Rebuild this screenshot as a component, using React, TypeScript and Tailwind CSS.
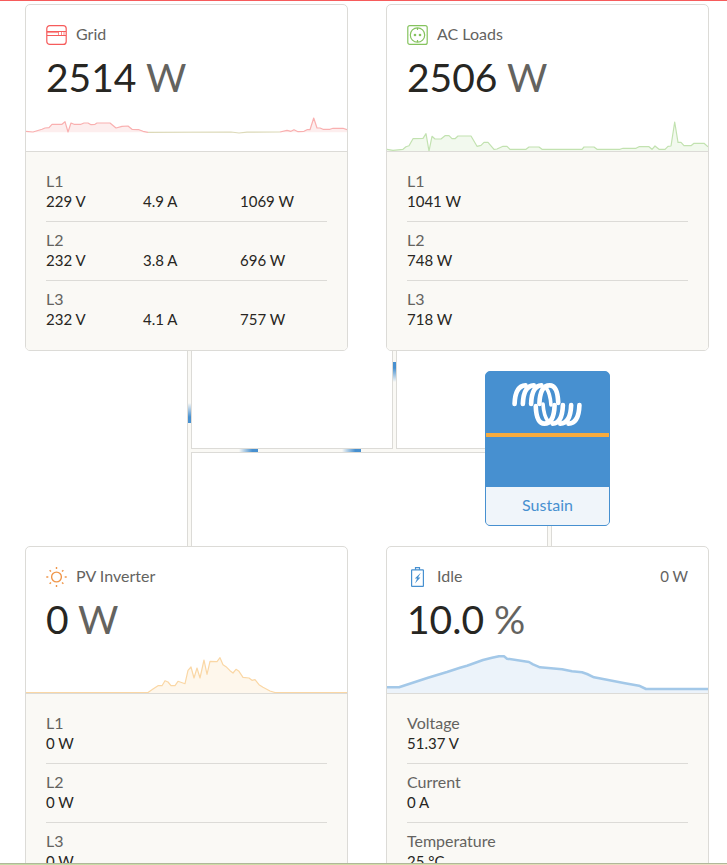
import type { ReactNode } from 'react';
import clsx from 'clsx';

type Row = { label: string; values: string[] };

const gridRows: Row[] = [
    { label: 'L1', values: ['229 V', '4.9 A', '1069 W'] },
    { label: 'L2', values: ['232 V', '3.8 A', '696 W'] },
    { label: 'L3', values: ['232 V', '4.1 A', '757 W'] },
];

const loadRows: Row[] = [
    { label: 'L1', values: ['1041 W'] },
    { label: 'L2', values: ['748 W'] },
    { label: 'L3', values: ['718 W'] },
];

const pvRows: Row[] = [
    { label: 'L1', values: ['0 W'] },
    { label: 'L2', values: ['0 W'] },
    { label: 'L3', values: ['0 W'] },
];

const batteryRows: Row[] = [
    { label: 'Voltage', values: ['51.37 V'] },
    { label: 'Current', values: ['0 A'] },
    { label: 'Temperature', values: ['25 °C'] },
];

// 24h of history, x runs 0-321, y 0-60
const gridMorning =
    '0,40.3 7,41 16,38.3 19,37 23,36.7 26,33.3 36,33.3 39,30.7 42,41 45,32 48,33.3 55,33.3 58,32 62,32 65,33.7 69,33.3 71,32 84,32 90,37 96,35.3 102,35 106,38.3 113,38.7 117,40.3 122,41.3';
const gridMidday = '122,41.3 205,41 213,42 221,41.2 254,41';
const gridEvening =
    '254,41 261,39.3 265,40.3 268,38.7 272,40.7 278,40.3 281,38.7 284,38.7 287.7,27 291,37 294,37 297,38.3 304,38.3 307,37.3 317,37.3 321,38.7';
const loadHistory =
    '0,58.3 6,59.3 16,58.3 19,55.7 22,54.7 26,47.7 36,47.3 39,42.7 42,60 45,45.3 48,48 54,48 58,44.7 62,44.7 65,47.7 68,47.7 71,45 84,45 90,55.3 94,54.3 97,51.3 101,51.3 107,58.3 110,58 116,55.3 120,55.3 123,58.3 139,58.3 142,56 152,56 155,58.3 195,58.3 197,56 207,56 210,58.3 233,58.3 236,57.3 249,57.3 252,55.7 262,55.7 265,58.3 268,55 272,58.3 278,58.3 281,55.3 284,55 287.7,31 291,51.3 294,51.3 297,54.7 304,54.7 307,52.3 317,52.3 321,55.7';
const pvHistory =
    '0,59.5 122,59.5 127,56 132,52.7 136,52.7 139,47.7 142,49 145,52.7 149,52.7 152,48.3 159,50.7 162,37.3 165,34 168,45 171,35 174,45 178,27 181,41.3 184,28.3 191,28.7 194,24.7 197,31.7 200,33.7 204,37.7 207,40 210,36.3 213,38.3 217,44.3 223,45 226,47.3 229,46.7 233,51.7 237,54.3 244,58 249,59.5 321,59.5';
const batteryHistory =
    '0,54.3 12,54.3 41,44.7 60,39 73,34.7 80,32.7 96,27 105,24.7 112,23.2 117,23.3 120,25.7 142,29 146,31.3 153,34.3 175,36.3 185,38.3 195,39.3 200,41 207,44.3 238,50.3 252,52.7 259,56 321,56';

type SeriesProps = { points: string; stroke: string; fill: string; base?: number; width?: number };

function Series({ points, stroke, fill, base = 60, width = 1.2 }: SeriesProps) {
    const start = points.split(',')[0];
    const end = points.split(' ').pop()!.split(',')[0];
    return (
        <>
            <polygon points={`${start},${base} ${points} ${end},${base}`} fill={fill} />
            <polyline points={points} fill="none" stroke={stroke} strokeWidth={width} strokeLinejoin="round" />
        </>
    );
}

function GridIcon() {
    return (
        <svg viewBox="0 0 21 20" className="w-[21px] h-5" fill="none" stroke="#f65b5b" strokeWidth="1.2">
            <rect x="0.8" y="0.6" width="19.4" height="18.8" rx="3" />
            <path d="M1 6.5h19M1 10.5h19" />
            <path d="M1 7.6h11.5M12.5 7v3.5M15.5 7v3.5M18 7v3.5" strokeOpacity="0.7" strokeWidth="1" />
        </svg>
    );
}

function SocketIcon() {
    return (
        <svg viewBox="0 0 21 20" className="w-[21px] h-5" fill="none" stroke="#85c35e" strokeWidth="1.2">
            <rect x="0.8" y="0.6" width="19.4" height="18.8" rx="2" />
            <circle cx="10.5" cy="10" r="7.2" />
            <path d="M10.5 3v2M10.5 15v2" />
            <g fill="#85c35e" stroke="none">
                <circle cx="8" cy="10" r="1.3" />
                <circle cx="13" cy="10" r="1.3" />
            </g>
        </svg>
    );
}

function SunIcon() {
    return (
        <svg viewBox="0 0 21 20" className="w-[21px] h-5" fill="none" stroke="#f0964a" strokeWidth="1.4">
            <circle cx="10.5" cy="10" r="4.9" />
            <path d="M10.5 0v2M10.5 18V20M0.3 10h2M18.7 10h2M3.6 3.2l1.4 1.4M16 15.4l1.4 1.4M17.4 3.2l-1.4 1.4M5 15.4l-1.4 1.4" />
        </svg>
    );
}

function BatteryIcon() {
    return (
        <svg viewBox="0 0 21 20" className="w-[21px] h-5" fill="none" stroke="#4790d0" strokeWidth="1.2">
            <rect x="4.6" y="2.8" width="11.8" height="16.6" rx="0.5" />
            <path d="M8.5 2.8V0.7h4V2.8" />
            <path d="M13.8 5.8l-6 5.8h2.3l-2.1 5 5.4-6.2h-2.3z" fill="#4790d0" stroke="none" />
        </svg>
    );
}

type CardProps = {
    icon: ReactNode;
    title: string;
    aside?: string;
    value: string;
    unit: string;
    rows: Row[];
    children: ReactNode;
};

function Card({ icon, title, aside, value, unit, rows, children }: CardProps) {
    return (
        <section className="border border-[#dcdbd7] rounded-[5px] bg-white overflow-hidden">
            <header className="px-5 pt-5">
                <div className="flex items-center h-5 leading-5 text-[#64635f]">
                    {icon}
                    <h2 className="ml-[9px] text-[16px] leading-[18px] pb-0.5">{title}</h2>
                    {aside && <span className="ml-auto text-[15px] leading-[18px] pb-0.5">{aside}</span>}
                </div>
                <p className="mt-2 text-[39px] leading-12 text-[#272622]">
                    {value} <span className="text-[#64635f]">{unit}</span>
                </p>
            </header>
            <svg viewBox="0 10 321 50" preserveAspectRatio="none" className="block w-full h-[50px]">
                {children}
            </svg>
            <dl className="border-t border-[#dcdbd7] bg-[#faf9f5] px-5 py-[11px]">
                {rows.map((row, i) => (
                    <div
                        key={row.label}
                        className={clsx(
                            'grid grid-cols-3 gap-x-[10px] pt-2 pb-[9px]',
                            i < rows.length - 1 && 'border-b border-[#dcdbd7]',
                        )}
                    >
                        <dt className="col-span-3 text-[16px] leading-5 text-[#64635f]">{row.label}</dt>
                        {row.values.map((v) => (
                            <dd key={v} className="text-[15px] leading-[21px] text-[#272622]">{v}</dd>
                        ))}
                    </div>
                ))}
            </dl>
        </section>
    );
}

function Wires() {
    return (
        <svg
            viewBox="0 0 684 195"
            preserveAspectRatio="none"
            className="absolute inset-0 w-full h-full"
            shapeRendering="crispEdges"
        >
            <defs>
                <linearGradient id="down" x1="0" y1="0" x2="0" y2="1">
                    <stop offset="0" stopColor="#4790d0" stopOpacity="0" />
                    <stop offset="0.7" stopColor="#4790d0" />
                </linearGradient>
                <linearGradient id="up" x1="0" y1="1" x2="0" y2="0">
                    <stop offset="0" stopColor="#4790d0" stopOpacity="0" />
                    <stop offset="0.7" stopColor="#4790d0" />
                </linearGradient>
                <linearGradient id="right">
                    <stop offset="0" stopColor="#4790d0" stopOpacity="0" />
                    <stop offset="0.7" stopColor="#4790d0" />
                </linearGradient>
            </defs>
            <path d="M163 0h3v195h-3zM368 0h3v98h-3zM163 98h300v3H163zM523 170h3v25h-3z" fill="#faf9f5" />
            <path
                d="M162.5 0V195M166.5 0V97.5H367.5V0M371.5 0V97.5H463M463 101.5H166.5V195M522.5 170V195M526.5 170V195"
                fill="none"
                stroke="#dcdbd7"
            />
            <rect x="163" y="52" width="3" height="20" fill="url(#down)" />
            <rect x="368" y="11" width="3" height="20" fill="url(#up)" />
            <rect x="214" y="98" width="19" height="3" fill="url(#right)" />
            <rect x="317" y="98" width="19" height="3" fill="url(#right)" />
        </svg>
    );
}

function CoilLogo() {
    return (
        <svg viewBox="0 0 210 130" className="w-[70px] h-[43px]" fill="none" stroke="#fff" strokeWidth="14" strokeLinecap="round">
            <path d="M7 63C8 32 17 8 40 7" />
            <path d="M32 63C33 32 42 8 65 7" />
            <path d="M57 63C58 32 67 8 88 7" />
            <path d="M82 63C83 32 92 7 113 7C133 7 138 32 139 60" />
            <path d="M203 67C202 98 193 122 170 123" />
            <path d="M178 67C177 98 168 122 145 123" />
            <path d="M153 67C152 98 143 122 122 123" />
            <path d="M128 67C127 98 118 123 97 123C77 123 72 98 71 70" />
            <path d="M102 14C114 30 116 50 117 66" strokeWidth="11" />
            <path d="M108 116C96 100 94 80 93 64" strokeWidth="11" />
        </svg>
    );
}

function Inverter() {
    return (
        <div className="relative w-[125px] h-[155px] rounded-[5px] border border-[#4790d0] bg-[#4790d0] overflow-hidden">
            <div className="flex justify-center pt-[11px] pr-[2px] h-[61px]">
                <CoilLogo />
            </div>
            <div className="-mx-px h-1 bg-[#f7ab3e]" />
            <div className="h-[50px]" />
            <p className="h-[38px] leading-[36px] text-center text-[16px] text-[#4790d0] bg-[#f0f5fa]">Sustain</p>
        </div>
    );
}

export default function App() {
    return (
        <div className="flex flex-col h-screen overflow-hidden bg-white font-['Lato','Open_Sans',sans-serif]">
            <div className="h-px shrink-0 bg-[#f65b5b]" />
            <main className="flex-1 min-h-0 overflow-hidden pt-[3px] pl-[25px] pr-[18px]">
                <div className="grid grid-cols-2 gap-x-[38px]">
                    <Card icon={<GridIcon />} title="Grid" value="2514" unit="W" rows={gridRows}>
                        <Series points={gridMorning} stroke="#f9b0b0" fill="#fdeeee" base={41.3} />
                        <Series points={gridMidday} stroke="#dcd9b8" fill="none" base={41.3} />
                        <Series points={gridEvening} stroke="#f9b0b0" fill="#fdeeee" base={41.3} />
                    </Card>
                    <Card icon={<SocketIcon />} title="AC Loads" value="2506" unit="W" rows={loadRows}>
                        <Series points={loadHistory} stroke="#c2e2b0" fill="#f2f9ee" />
                    </Card>
                </div>

                {/* energy flow */}
                <div className="relative grid grid-cols-2 gap-x-[38px] h-[195px]">
                    <Wires />
                    <div className="col-start-2 flex justify-center pt-5">
                        <Inverter />
                    </div>
                </div>

                <div className="grid grid-cols-2 gap-x-[38px]">
                    <Card icon={<SunIcon />} title="PV Inverter" value="0" unit="W" rows={pvRows}>
                        <Series points={pvHistory} stroke="#fad7a5" fill="#fef7ec" />
                    </Card>
                    <Card icon={<BatteryIcon />} title="Idle" aside="0 W" value="10.0" unit="%" rows={batteryRows}>
                        <Series points={batteryHistory} stroke="#a3c8e8" fill="#ecf3fa" width={2.5} />
                    </Card>
                </div>
            </main>
            <div className="h-0.5 shrink-0 border-t border-[#b0b89a] bg-linear-to-r from-[#c5dba5] via-[#d3dca6] to-[#f0dcc4]" />
        </div>
    );
}
